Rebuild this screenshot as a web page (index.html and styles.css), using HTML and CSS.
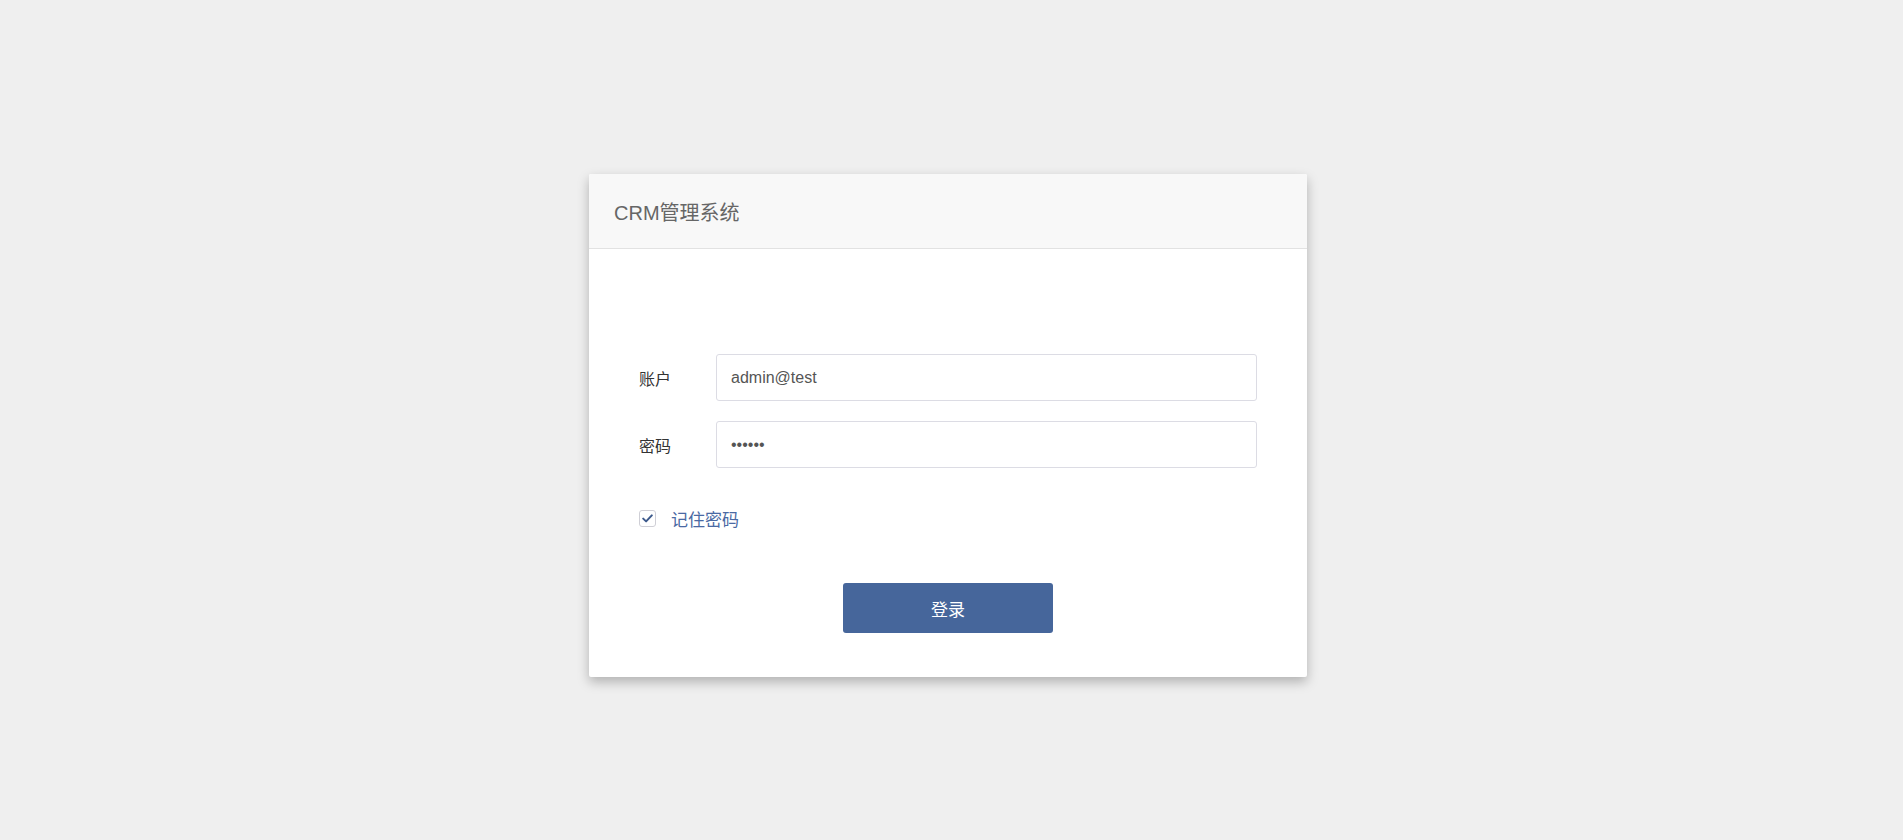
FILE: index.html
```html
<!DOCTYPE html>
<html lang="zh-CN">
<head>
<meta charset="utf-8">
<title>CRM管理系统</title>
<link rel="stylesheet" href="styles.css">
</head>
<body>
<div class="page">
  <div class="card">
    <div class="card-header">CRM管理系统</div>
    <form class="card-body">
      <div class="row">
        <label class="label">账户</label>
        <input class="input" type="text" value="admin@test">
      </div>
      <div class="row">
        <label class="label">密码</label>
        <input class="input" type="password" value="123456">
      </div>
      <div class="remember">
        <span class="checkbox">
          <svg width="11" height="9" viewBox="0 0 11 9"><path d="M1.2 4.6 L4.1 7.4 L9.8 1.4" fill="none" stroke="#3d5a8c" stroke-width="2" stroke-linecap="round" stroke-linejoin="round"/></svg>
        </span>
        <span class="remember-text">记住密码</span>
      </div>
      <div class="actions">
        <button class="btn" type="button">登录</button>
      </div>
    </form>
  </div>
</div>
</body>
</html>
```
FILE: styles.css
```css
html, body {
  margin: 0;
  padding: 0;
  background: #efefef;
  font-family: "Liberation Sans", "Noto Sans CJK SC", sans-serif;
}
.page {
  display: flex;
  justify-content: center;
  padding-top: 174px;
  padding-right: 7px;
  padding-bottom: 40px;
}
.card {
  width: 718px;
  background: #fff;
  border-radius: 2px;
  box-shadow: 0 5px 12px rgba(0, 0, 0, 0.26);
}
.card-header {
  height: 75px;
  box-sizing: border-box;
  padding: 0 25px;
  display: flex;
  align-items: center;
  background: #f8f8f8;
  border-bottom: 1px solid #e2e2e2;
  border-radius: 2px 2px 0 0;
  color: #666;
  font-size: 20px;
}
.card-body {
  padding: 105px 50px 44px 50px;
  margin: 0;
}
.row {
  display: flex;
  align-items: center;
  margin-bottom: 20px;
}
.label {
  width: 77px;
  flex: none;
  font-size: 16px;
  color: #333;
}
.input {
  flex: 1;
  height: 47px;
  box-sizing: border-box;
  border: 1px solid #dcdce4;
  border-radius: 3px;
  padding: 0 14px;
  font-family: "Liberation Sans", "Noto Sans CJK SC", sans-serif;
  font-size: 16px;
  color: #555;
  outline: none;
  background: #fff;
}
.remember {
  display: flex;
  align-items: center;
  margin-top: 38px;
}
.checkbox {
  width: 15px;
  height: 15px;
  border: 1px solid #cfcfd6;
  border-radius: 3px;
  display: flex;
  align-items: center;
  justify-content: center;
  background: #fff;
}
.remember-text {
  margin-left: 15px;
  font-size: 17px;
  color: #4a69a3;
}
.actions {
  display: flex;
  justify-content: center;
  margin-top: 52px;
}
.btn {
  width: 210px;
  height: 50px;
  border: none;
  border-radius: 3px;
  background: #46669b;
  color: #fff;
  font-family: "Liberation Sans", "Noto Sans CJK SC", sans-serif;
  font-size: 17px;
  cursor: pointer;
}
```
